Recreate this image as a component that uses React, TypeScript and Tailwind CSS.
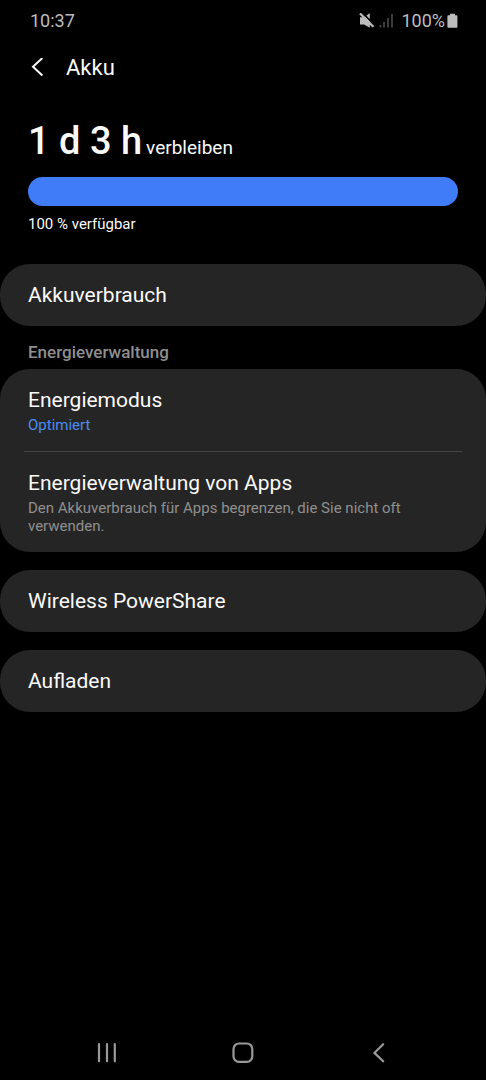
import type { ReactNode } from "react";

function StatusBar() {
  return (
    <div className="flex h-10 items-center justify-between pt-0.5 pr-7 pl-[30px] text-lg text-[#bdbdbd]">
      <time>10:37</time>
      <div className="flex items-center">
        <svg className="mr-1 h-4 w-4" viewBox="0 0 16 16" aria-label="Stumm" role="img">
          <path d="M1 4.200h4L10.800 .2v14.600L5 11.400H1z" fill="#bdbdbd" />
          <path d="M3 -.6 16 12.400" stroke="#000" strokeWidth="1.600" />
          <path d="M1 .4 14.400 13.800" stroke="#bdbdbd" strokeWidth="2.200" />
        </svg>
        <svg className="mr-2 h-4 w-3.5" viewBox="0 0 14 16" aria-label="Kein Signal" role="img">
          <path d="M1.500 12v2.500M5 9v5.500M9 5v9.500M13 1v13.500" stroke="#4a4a4a" strokeWidth="1.600" />
        </svg>
        <span>100%</span>
        <svg className="ml-0.5 h-4 w-[11px]" viewBox="0 0 11 16" aria-hidden="true">
          <path d="M3 .7h5v1.600h1.600q.8 0 .8 1v10.400q0 1-.8 1H1.400q-1 0-1-1V3.300q0-1 1-1H3z" fill="#bdbdbd" />
        </svg>
      </div>
    </div>
  );
}

function Card({ children }: { children: ReactNode }) {
  return <div className="flex flex-col overflow-hidden rounded-[30px] bg-[#252525]">{children}</div>;
}

function Row({ title, note, accent }: { title: string; note?: string; accent?: boolean }) {
  return (
    <button type="button" className="flex w-full flex-col gap-0.5 px-7 py-[17px] text-left">
      <span className="text-[21px] leading-7 text-[#fafafa]">{title}</span>
      {note && (
        <span className={accent ? "text-[15px] leading-[18px] text-[#4a8df0]" : "text-[15px] leading-[18px] text-[#8f8f8f]"}>
          {note}
        </span>
      )}
    </button>
  );
}

export default function App() {
  return (
    <div className="flex min-h-screen flex-col bg-black font-['Roboto',sans-serif] text-[#fafafa]">
      <StatusBar />
      <header className="flex h-14 items-center pl-7">
        <button type="button" aria-label="Zurück" className="flex w-[38px] items-center">
          <svg className="h-5 w-5" viewBox="0 0 20 20" fill="none" stroke="#fafafa" strokeWidth="2">
            <path d="M14.400 0 5 8.800l9.400 8.800" />
          </svg>
        </button>
        <h1 className="text-[22px] leading-[26px]">Akku</h1>
      </header>

      <main className="flex grow flex-col">
        <section className="px-7 pt-[21px]">
          <p className="flex items-baseline gap-1">
            <span className="text-[38px] leading-[48px] font-medium">1 d 3 h</span>
            <span className="text-[19px] leading-7">verbleiben</span>
          </p>
          <div
            role="progressbar"
            aria-valuenow={100}
            aria-valuemin={0}
            aria-valuemax={100}
            aria-label="Akkustand"
            className="mt-3 h-[29px] rounded-full bg-[#407bf8]"
          />
          <p className="mt-2 text-[15px] leading-5">100 % verfügbar</p>
        </section>

        <div className="mt-[30px]">
          <Card>
            <Row title="Akkuverbrauch" />
          </Card>
        </div>

        <h2 className="px-7 pt-4 pb-[7px] text-[17px] leading-5 font-medium text-[#8f8f8f]">Energieverwaltung</h2>
        <div className="flex flex-col gap-[18px]">
          <Card>
            <Row title="Energiemodus" note="Optimiert" accent />
            <hr className="mx-6 border-[#444444]" />
            <Row
              title="Energieverwaltung von Apps"
              note="Den Akkuverbrauch für Apps begrenzen, die Sie nicht oft verwenden."
            />
          </Card>
          <Card>
            <Row title="Wireless PowerShare" />
          </Card>
          <Card>
            <Row title="Aufladen" />
          </Card>
        </div>
      </main>

      <nav className="grid h-14 grid-cols-3 px-[39px]" aria-label="Systemnavigation">
        <button type="button" aria-label="Letzte Apps" className="flex items-center justify-center">
          <svg className="h-6 w-6" viewBox="0 0 24 24" stroke="#999" strokeWidth="2.200" strokeLinecap="round">
            <path d="M4 4v17.300M12 4v17.300M19.800 4v17.300" />
          </svg>
        </button>
        <button type="button" aria-label="Startseite" className="flex items-center justify-center">
          <svg className="h-6 w-6" viewBox="0 0 24 24" fill="none" stroke="#999" strokeWidth="2.200">
            <rect x="2.500" y="3.500" width="18.800" height="18.300" rx="5.500" />
          </svg>
        </button>
        <button type="button" aria-label="Zurück" className="flex items-center justify-center">
          <svg className="h-6 w-6" viewBox="0 0 24 24" fill="none" stroke="#999" strokeWidth="2.200" strokeLinecap="round">
            <path d="M16.200 4.200 7.400 12.900l8.800 8.400" />
          </svg>
        </button>
      </nav>
    </div>
  );
}
